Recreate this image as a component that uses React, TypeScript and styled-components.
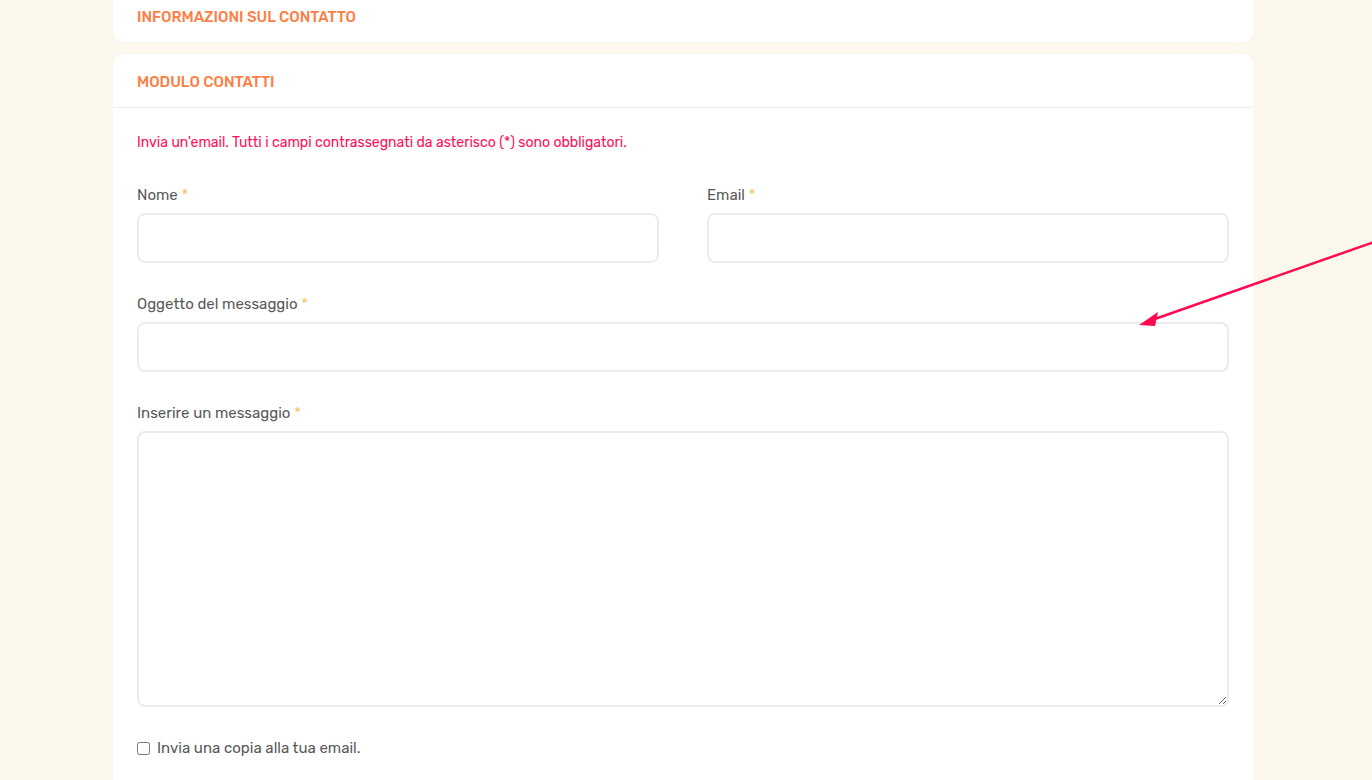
import styled, { createGlobalStyle } from 'styled-components';

// --- Global ---

const GlobalStyle = createGlobalStyle`
  html, body {
    margin: 0;
    padding: 0;
    background: #fcf8ee;
    font-family: Rubik, Inter, "Noto Sans", sans-serif;
    color: #555;
    overflow: hidden;
  }
  * { box-sizing: border-box; }
`;

// --- Styled Components ---

const Page = styled.div`
  position: relative;
  width: 1372px;
  height: 780px;
  overflow: hidden;
`;

const Column = styled.main`
  width: 1140px;
  margin: -11px 0 0 113px;
  display: flex;
  flex-direction: column;
  gap: 12px;
`;

const Card = styled.section`
  background: #fff;
  border-radius: 10px;
`;

const CardHeader = styled.header<{ $divider?: boolean }>`
  padding: 17px 24px 14px;
  border-bottom: ${({ $divider }) => ($divider ? '1px solid #eeeeee' : 'none')};
`;

const CardTitle = styled.h3`
  margin: 0;
  font-size: 15px;
  line-height: 22px;
  font-weight: 500;
  color: #fd7e45;
  text-transform: uppercase;
`;

const CardBody = styled.div`
  padding: 24px 24px 40px;
`;

const Notice = styled.p`
  margin: 0 0 31px;
  font-size: 14px;
  line-height: 21px;
  color: #ff0f5a;
`;

const FormGrid = styled.div`
  display: grid;
  grid-template-columns: 1fr 1fr;
  column-gap: 48px;
  row-gap: 30px;
`;

const Field = styled.div<{ $wide?: boolean }>`
  display: flex;
  flex-direction: column;
  gap: 7px;
  grid-column: ${({ $wide }) => ($wide ? '1 / -1' : 'auto')};
`;

const Label = styled.label`
  font-size: 15px;
  line-height: 22px;
  color: #5a5a5a;
`;

const Star = styled.span`
  color: #f7c56a;
`;

const Input = styled.input`
  height: 50px;
  width: 100%;
  border: 2px solid #ececec;
  border-radius: 8px;
  background: #fff;
  padding: 0 14px;
  font: inherit;
  outline: none;
`;

const TextArea = styled.textarea`
  height: 276px;
  width: 100%;
  border: 2px solid #ececec;
  border-radius: 8px;
  background: #fff;
  padding: 12px 14px;
  font: inherit;
  outline: none;
  resize: vertical;
`;

const CheckRow = styled.label`
  grid-column: 1 / -1;
  display: flex;
  align-items: center;
  gap: 7px;
  font-size: 15px;
  line-height: 22px;
  color: #5a5a5a;
`;

const Check = styled.input`
  margin: 0;
  width: 13px;
  height: 13px;
`;

const Overlay = styled.svg`
  position: absolute;
  inset: 0;
  pointer-events: none;
`;

// --- Data ---

const fields = [
  { id: 'nome', label: 'Nome', wide: false },
  { id: 'email', label: 'Email', wide: false },
  { id: 'oggetto', label: 'Oggetto del messaggio', wide: true },
];

export default function App() {
  return (
    <Page>
      <GlobalStyle />
      <Column>
        <Card>
          <CardHeader>
            <CardTitle>Informazioni sul contatto</CardTitle>
          </CardHeader>
        </Card>
        <Card>
          <CardHeader $divider>
            <CardTitle>Modulo contatti</CardTitle>
          </CardHeader>
          <CardBody>
            <Notice>
              Invia un'email. Tutti i campi contrassegnati da asterisco (*) sono obbligatori.
            </Notice>
            <FormGrid>
              {fields.map((f) => (
                <Field key={f.id} $wide={f.wide}>
                  <Label htmlFor={f.id}>
                    {f.label}
                    <Star> *</Star>
                  </Label>
                  <Input id={f.id} type="text" />
                </Field>
              ))}
              <Field $wide>
                <Label htmlFor="messaggio">
                  Inserire un messaggio
                  <Star> *</Star>
                </Label>
                <TextArea id="messaggio" />
              </Field>
              <CheckRow>
                <Check type="checkbox" />
                Invia una copia alla tua email.
              </CheckRow>
            </FormGrid>
          </CardBody>
        </Card>
      </Column>

      {/* annotation arrow */}
      <Overlay width="1372" height="780" viewBox="0 0 1372 780">
        <line x1="1374" y1="242" x2="1152" y2="320" stroke="#ff0a50" strokeWidth="2.5" />
        <polygon points="1139,325 1158,312 1155,326" fill="#ff0a50" />
      </Overlay>
    </Page>
  );
}
